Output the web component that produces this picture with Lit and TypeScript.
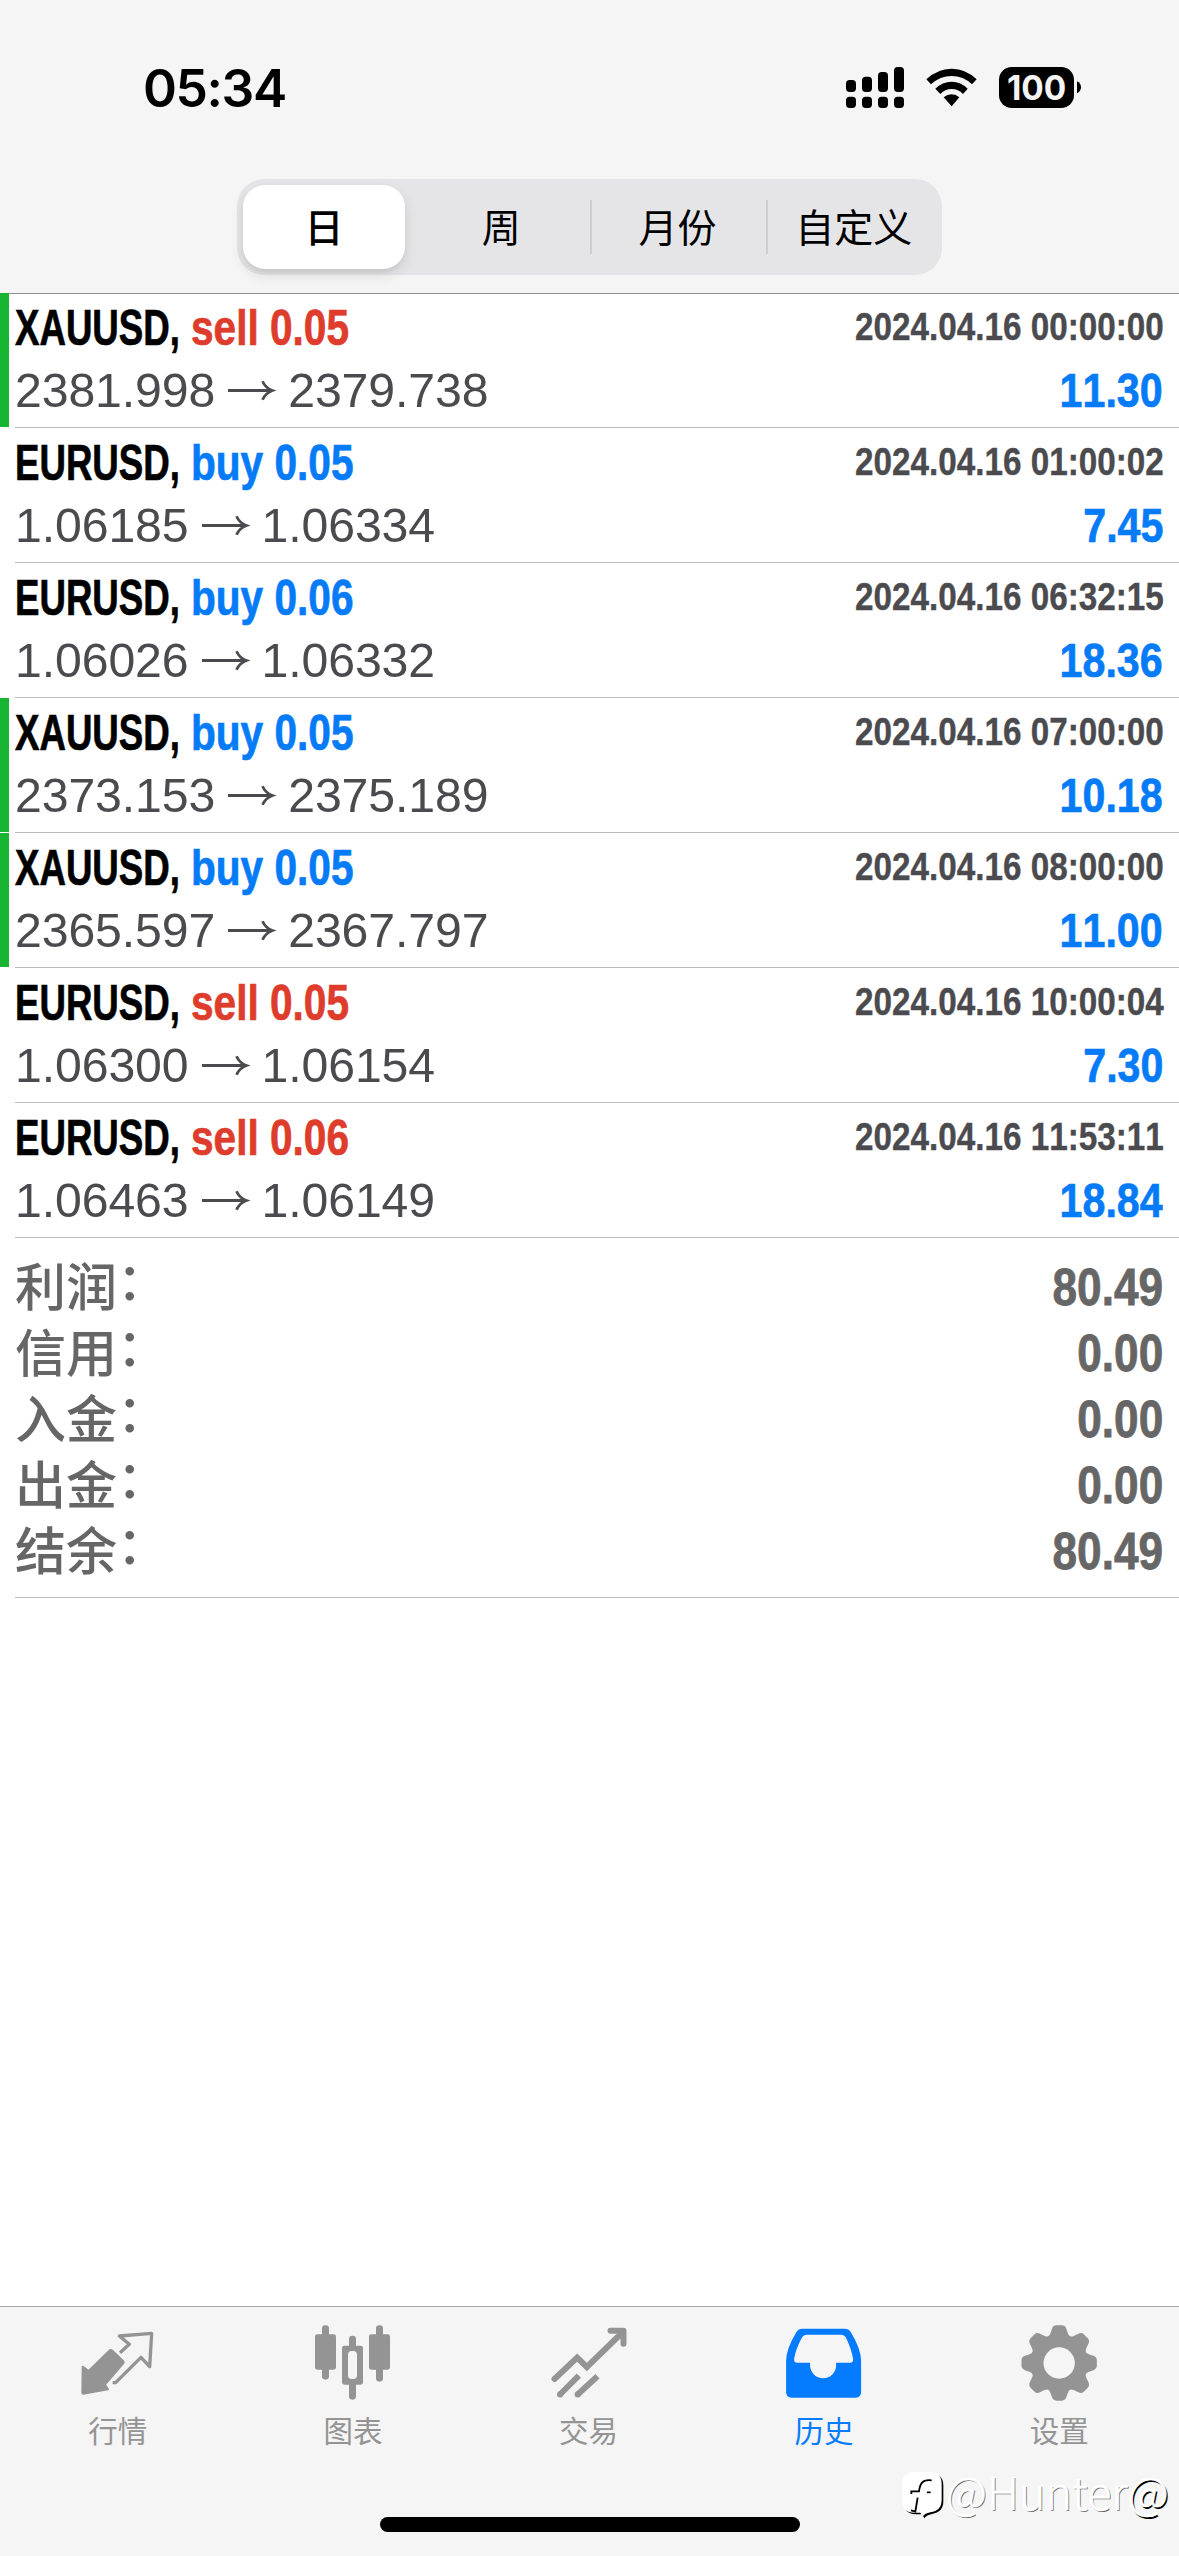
import { LitElement, html, css, svg } from "lit";
import { customElement, property } from "lit/decorators.js";
import { classMap } from "lit/directives/class-map.js";

type Deal = {
  symbol: string;
  side: "buy" | "sell";
  volume: string;
  open: string;
  close: string;
  time: string;
  profit: string;
  marked?: boolean;
};

const DEALS: Deal[] = [
  { symbol: "XAUUSD", side: "sell", volume: "0.05", open: "2381.998", close: "2379.738", time: "2024.04.16 00:00:00", profit: "11.30", marked: true },
  { symbol: "EURUSD", side: "buy", volume: "0.05", open: "1.06185", close: "1.06334", time: "2024.04.16 01:00:02", profit: "7.45" },
  { symbol: "EURUSD", side: "buy", volume: "0.06", open: "1.06026", close: "1.06332", time: "2024.04.16 06:32:15", profit: "18.36" },
  { symbol: "XAUUSD", side: "buy", volume: "0.05", open: "2373.153", close: "2375.189", time: "2024.04.16 07:00:00", profit: "10.18", marked: true },
  { symbol: "XAUUSD", side: "buy", volume: "0.05", open: "2365.597", close: "2367.797", time: "2024.04.16 08:00:00", profit: "11.00", marked: true },
  { symbol: "EURUSD", side: "sell", volume: "0.05", open: "1.06300", close: "1.06154", time: "2024.04.16 10:00:04", profit: "7.30" },
  { symbol: "EURUSD", side: "sell", volume: "0.06", open: "1.06463", close: "1.06149", time: "2024.04.16 11:53:11", profit: "18.84" },
];

const TOTALS: [string, string][] = [
  ["利润", "80.49"],
  ["信用", "0.00"],
  ["入金", "0.00"],
  ["出金", "0.00"],
  ["结余", "80.49"],
];

@customElement("status-bar")
class StatusBar extends LitElement {
  static styles = css`
    :host { display: flex; height: 179px; justify-content: space-between; align-items: flex-start; color: #000; }
    .time { margin: 57px 0 0 143px; font: 600 51.5px/62px Inter, "Liberation Sans", sans-serif; letter-spacing: -1.4px; }
    .icons { display: flex; margin-right: 97px; padding-top: 66px; }
    .icons svg { display: block; }
    .battery { font: 700 34px Inter, "Liberation Sans", sans-serif; }
  `;
  render() {
    return html`
      <div class="time">05:34</div>
      <div class="icons">
        <svg width="80" height="42" viewBox="75 78 240 126">
          <rect x="78" y="120" width="30" height="36" rx="11" />
          <rect x="126" y="110" width="30" height="46" rx="11" />
          <rect x="174" y="96" width="30" height="60" rx="11" />
          <rect x="222" y="81" width="30" height="75" rx="11" />
          <rect x="78" y="170" width="30" height="34" rx="11" />
          <rect x="126" y="170" width="30" height="34" rx="11" />
          <rect x="174" y="170" width="30" height="34" rx="11" />
          <rect x="222" y="170" width="30" height="34" rx="11" />
        </svg>
        <svg width="70" height="42" viewBox="315 78 210 126">
          <path d="M319 118Q352 86 395 86T470 118L456 133Q430 108 395 108T333 133Z" />
          <path d="M346 146Q367 125 395 125T443 146L429 162Q415 147 395 147T361 162Z" />
          <path d="M371 172Q382 163 395 163T418 172L395 199Z" />
        </svg>
        <svg class="battery" width="87" height="42" viewBox="525 78 261 126">
          <rect x="537" y="81" width="225" height="123" rx="38" />
          <path d="M771 124C787 130 787 154 771 160Z" />
          <text x="650" y="180" font-size="103" text-anchor="middle" textLength="178" lengthAdjust="spacingAndGlyphs" fill="#f5f5f5">100</text>
        </svg>
      </div>
    `;
  }
}

@customElement("period-picker")
class PeriodPicker extends LitElement {
  static styles = css`
    :host { display: flex; justify-content: center; height: 114px; }
    .track { display: flex; width: 705px; height: 96px; border-radius: 27px; background: #e5e5e7; font: 400 39px/80px "Noto Sans CJK SC", sans-serif; color: #000; }
    .seg { flex: 1; display: flex; justify-content: center; align-items: flex-start; padding-top: 6px; }
    .seg.ruled { background: linear-gradient(#cfcfd1, #cfcfd1) left center / 2px 54px no-repeat; }
    .seg.first { padding-top: 0; }
    .thumb { flex: 1; height: 84px; margin: 6px 8px 6px 6px; border-radius: 22px; background: #fff; text-align: center; font-weight: 500; box-shadow: 0 6px 14px rgba(0, 0, 0, 0.11), 0 3px 3px rgba(0, 0, 0, 0.04); }
  `;
  render() {
    return html`
      <div class="track">
        <div class="seg first"><div class="thumb">日</div></div>
        <div class="seg">周</div>
        <div class="seg ruled">月份</div>
        <div class="seg ruled">自定义</div>
      </div>
    `;
  }
}

@customElement("deal-row")
class DealRow extends LitElement {
  @property({ attribute: false }) deal!: Deal;
  static styles = css`
    :host { display: flex; height: 135px; font-family: "Liberation Sans", Arial, sans-serif; white-space: nowrap; font-kerning: none; }
    .mark { width: 9px; height: 134px; margin-right: 6px; }
    .mark.on { background: #18b532; }
    .body { flex: 1; display: flex; flex-direction: column; padding: 3px 15px 0 0; border-bottom: 1px solid #bcbcbe; }
    .line { display: flex; align-items: center; justify-content: space-between; height: 63px; }
    .head, .prices { display: flex; align-items: center; }
    .symbol { width: 176px; font: 700 49.5px/63px "Liberation Sans", sans-serif; font-kerning: none; }
    .fit { display: inline-block; transform-origin: left center; }
    .symbol .fit { transform: scaleX(0.74); color: #000; -webkit-text-stroke: 0.7px #000; }
    .side { font: 700 49.5px/63px "Liberation Sans", sans-serif; font-kerning: none; transform: scaleX(0.82); transform-origin: left center; -webkit-text-stroke: 0.7px currentColor; }
    .sell { color: #de3c2c; }
    .buy, .profit { color: #057bf8; }
    .time { font: 700 39.5px/61px "Liberation Sans", sans-serif; font-kerning: none; color: #4b4b4f; transform: scaleX(0.842); transform-origin: right center; -webkit-text-stroke: 0.4px currentColor; margin-top: -2px; }
    .prices { font-size: 48.2px; line-height: 63px; color: #4b4b4f; letter-spacing: -0.1px; }
    .arrow { display: block; width: 73px; height: 24px; }
    .profit { font: 700 49px/63px "Liberation Sans", sans-serif; font-kerning: none; margin-right: 1px; transform: scaleX(0.84); transform-origin: right center; -webkit-text-stroke: 0.7px currentColor; }
  `;
  render() {
    const d = this.deal;
    return html`
      <div class=${classMap({ mark: true, on: !!d.marked })}></div>
      <div class="body">
        <div class="line">
          <div class="head">
            <div class="symbol"><span class="fit">${d.symbol},</span></div>
            <div class="side ${d.side}">${d.side} ${d.volume}</div>
          </div>
          <div class="time">${d.time}</div>
        </div>
        <div class="line">
          <div class="prices">
            <span>${d.open}</span>
            <svg class="arrow" viewBox="0 0 73 24">
              <path d="M13 11.5H57M47.5 2.2Q50.5 9 57.5 11.5Q50.5 14 47.5 20.8" fill="none" stroke="#4b4b4f" stroke-width="2.8" />
            </svg>
            <span>${d.close}</span>
          </div>
          <div class="profit">${d.profit}</div>
        </div>
      </div>
    `;
  }
}

@customElement("totals-list")
class TotalsList extends LitElement {
  static styles = css`
    :host { display: block; margin-left: 15px; padding: 16px 16px 13px 0; border-bottom: 1px solid #bcbcbe; color: #666; }
    .row { display: flex; justify-content: space-between; height: 66px; }
    .label { display: flex; font: 500 51px/60px "Noto Sans CJK SC", sans-serif; }
    .colon { line-height: 48px; }
    .value { font: 700 52px/66px "Liberation Sans", sans-serif; transform: scaleX(0.85); transform-origin: right center; -webkit-text-stroke: 0.8px currentColor; }
  `;
  render() {
    return TOTALS.map(
      ([l, v]) => html`<div class="row">
        <div class="label"><span>${l}</span><span class="colon">：</span></div>
        <div class="value">${v}</div>
      </div>`
    );
  }
}

const TEETH = [0, 45, 90, 135, 180, 225, 270, 315];

const TABS = [
  {
    label: "行情",
    box: "83 100 240 240",
    art: svg`
      <path d="M97 231L115 244L177 183Q181 179 186 183L218 214Q222 218 218 222L164 285L173 299L99 312Q96 312 96 309Z" fill="currentColor" stroke="currentColor" stroke-width="6" stroke-linejoin="round" />
      <path d="M209 189L237 164L207 139L304 131L298 231L272 203L196 279H187" fill="none" stroke="currentColor" stroke-width="10" stroke-linejoin="round" />`,
  },
  {
    label: "图表",
    box: "789 100 240 240",
    art: svg`
      <g fill="currentColor">
        <rect x="795" y="134" width="63" height="106" rx="7" /><rect x="816" y="107" width="21" height="163" rx="10" />
        <rect x="957" y="134" width="63" height="106" rx="7" /><rect x="978" y="107" width="21" height="169" rx="10" />
        <rect x="876" y="168" width="63" height="117" rx="7" /><rect x="897" y="138" width="21" height="192" rx="10" />
      </g>
      <rect x="894" y="184" width="27" height="84" rx="11" fill="#f5f5f5" />`,
  },
  {
    label: "交易",
    box: "145.5 100 240 240",
    art: svg`
      <g fill="none" stroke="currentColor" stroke-width="18">
        <path d="M162 268L230 204L259 232L364 130" stroke-linecap="round" />
        <path d="M330 123H369V162" stroke-linecap="round" stroke-linejoin="round" />
        <path d="M235 258L180 313M291 260L233 313" />
      </g>
      <circle cx="179" cy="314" r="9.5" fill="currentColor" /><circle cx="232" cy="314" r="9.5" fill="currentColor" />`,
  },
  {
    label: "历史",
    box: "851.7 100 240 240",
    active: true,
    art: svg`
      <path fill="currentColor" fill-rule="evenodd" d="M906 117H1034Q1046 117 1052 127Q1083 178 1083 214V307Q1083 324 1066 324H875Q858 324 858 307V214Q858 178 889 127Q895 117 906 117ZM919 135Q910 135 906 143Q887 178 882 208Q881 219 891 219H930V227A39 39 0 0 0 1008 227V219H1050Q1060 219 1059 208Q1054 178 1037 143Q1033 135 1024 135Z" />`,
  },
  {
    label: "设置",
    box: "478 100 240 240",
    art: svg`
      <g fill="currentColor">
        ${TEETH.map((a) => svg`<path transform="rotate(${a} 598.5 220)" d="M563 142C571 138 573 129 577 117Q581 107 590 107H607Q616 107 620 117C624 129 626 138 634 142L630 160H567Z" />`)}
      </g>
      <circle cx="598.5" cy="220" r="66" fill="none" stroke="currentColor" stroke-width="38" />`,
  },
];

@customElement("tab-bar")
class TabBar extends LitElement {
  static styles = css`
    :host { display: block; height: 249px; border-top: 1px solid #a9a9ab; background: #f5f5f5; }
    .tabs { display: flex; padding: 16px 2px 0 0; }
    .tab { flex: 1; display: flex; flex-direction: column; align-items: center; color: #949494; font: 400 29.5px/44px "Noto Sans CJK SC", sans-serif; }
    .tab.active { color: #057bff; }
    .art { display: block; width: 80px; height: 80px; margin-bottom: 4px; }
    .home { width: 420px; height: 15px; border-radius: 8px; background: #000; margin: 66px auto 0; }
  `;
  render() {
    return html`
      <div class="tabs">
        ${TABS.map(
          (t) => html`<div class=${classMap({ tab: true, active: !!t.active })}>
            <svg class="art" viewBox=${t.box}>${t.art}</svg>
            <span>${t.label}</span>
          </div>`
        )}
      </div>
      <div class="home"></div>
    `;
  }
}

const BUBBLE =
  "M165 546H211Q247 546 247 582V629Q247 662 213 667Q197 670 190 680L183 668H165Q129 668 129 632V582Q129 546 165 546Z";

@customElement("user-tag")
class UserTag extends LitElement {
  static styles = css`
    :host { display: flex; align-items: flex-start; height: 60px; color: #fff; font: 300 45px/47px "Noto Sans CJK SC", sans-serif; }
    .logo { display: block; width: 44px; height: 50px; margin: 4px 0 0; }
    .name { text-shadow: 1px 1px 0 #666; -webkit-text-stroke: 0.5px #fff; }
    .at { text-shadow: 1.5px 1.5px 0 #000; -webkit-text-stroke: 0.5px #fff; }
  `;
  render() {
    return html`
      <svg class="logo" viewBox="128 543 132 150">
        <path d=${BUBBLE} transform="translate(5 5)" fill="#000" />
        <path d=${BUBBLE} fill="#fff" />
        <path d="M217 571C188 567 182 582 179 604H156V612M175 623L168 665L155 661" fill="none" stroke="#000" stroke-width="5.5" />
        <path d="M203 607H214" stroke="#000" stroke-width="5" />
      </svg>
      <span class="name">@Hunter</span><span class="at">@</span>
    `;
  }
}

@customElement("app-root")
class AppRoot extends LitElement {
  static styles = css`
    :host { display: flex; flex-direction: column; position: relative; width: 1179px; height: 2556px; overflow: hidden; background: #fff; }
    .top { background: #f5f5f5; border-bottom: 1px solid #8e8e90; }
    .list { flex: 1; margin-top: -1px; }
    .tag { position: absolute; left: 902px; top: 2467px; }
  `;
  render() {
    return html`
      <div class="top"><status-bar></status-bar><period-picker></period-picker></div>
      <div class="list">
        ${DEALS.map((d) => html`<deal-row .deal=${d}></deal-row>`)}
        <totals-list></totals-list>
      </div>
      <tab-bar></tab-bar>
      <user-tag class="tag"></user-tag>
    `;
  }
}
